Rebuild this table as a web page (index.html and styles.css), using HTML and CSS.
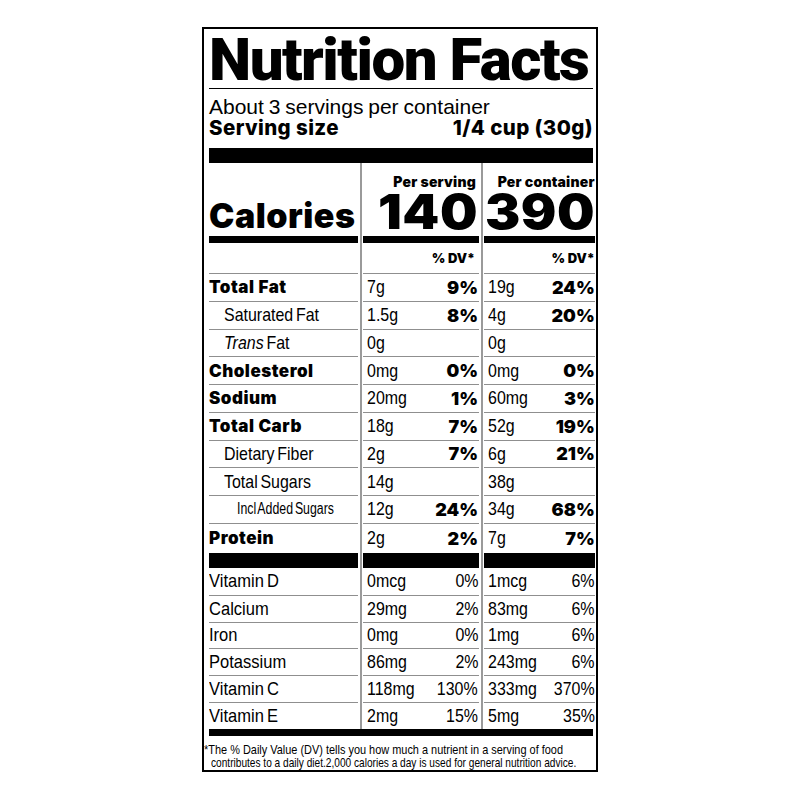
FILE: index.html
```html
<!DOCTYPE html>
<html lang="en">
<head>
<meta charset="utf-8">
<title>Nutrition Facts</title>
<link rel="stylesheet" href="styles.css">
</head>
<body>
<section class="label">
  <h1 class="title">Nutrition Facts</h1>
  <p class="servings">About 3 servings per container</p>
  <p class="serving-size"><span>Serving size</span><span>1/4 cup (30g)</span></p>
  <div class="rule-thick"></div>

  <div class="facts">
    <div class="vline vline-1"></div>
    <div class="vline vline-2"></div>

    <div class="cell c-head c-label"><span class="calories">Calories</span></div>
    <div class="cell c-head c-val"><span class="per">Per serving</span><span class="kcal">140</span></div>
    <div class="cell c-head c-val c-right"><span class="per">Per container</span><span class="kcal">390</span></div>

    <div class="cell c-dv"></div>
    <div class="cell c-dv c-val"><span class="dv">% DV*</span></div>
    <div class="cell c-dv c-val c-right"><span class="dv">% DV*</span></div>

    <div class="cell c-label b">Total Fat</div>
    <div class="cell c-val"><span class="n">7g</span><span class="pct">9%</span></div>
    <div class="cell c-val c-right"><span class="n">19g</span><span class="pct">24%</span></div>

    <div class="cell c-label ind1"><span class="n">Saturated Fat</span></div>
    <div class="cell c-val"><span class="n">1.5g</span><span class="pct">8%</span></div>
    <div class="cell c-val c-right"><span class="n">4g</span><span class="pct">20%</span></div>

    <div class="cell c-label ind1"><span class="n"><i>Trans</i> Fat</span></div>
    <div class="cell c-val"><span class="n">0g</span></div>
    <div class="cell c-val c-right"><span class="n">0g</span></div>

    <div class="cell c-label b">Cholesterol</div>
    <div class="cell c-val"><span class="n">0mg</span><span class="pct">0%</span></div>
    <div class="cell c-val c-right"><span class="n">0mg</span><span class="pct">0%</span></div>

    <div class="cell c-label b">Sodium</div>
    <div class="cell c-val"><span class="n">20mg</span><span class="pct">1%</span></div>
    <div class="cell c-val c-right"><span class="n">60mg</span><span class="pct">3%</span></div>

    <div class="cell c-label b">Total Carb</div>
    <div class="cell c-val"><span class="n">18g</span><span class="pct">7%</span></div>
    <div class="cell c-val c-right"><span class="n">52g</span><span class="pct">19%</span></div>

    <div class="cell c-label ind1"><span class="n">Dietary Fiber</span></div>
    <div class="cell c-val"><span class="n">2g</span><span class="pct">7%</span></div>
    <div class="cell c-val c-right"><span class="n">6g</span><span class="pct">21%</span></div>

    <div class="cell c-label ind1"><span class="n">Total Sugars</span></div>
    <div class="cell c-val"><span class="n">14g</span></div>
    <div class="cell c-val c-right"><span class="n">38g</span></div>

    <div class="cell c-label ind2"><span class="n sm">Incl Added Sugars</span></div>
    <div class="cell c-val"><span class="n">12g</span><span class="pct">24%</span></div>
    <div class="cell c-val c-right"><span class="n">34g</span><span class="pct">68%</span></div>

    <div class="cell c-prot c-label b">Protein</div>
    <div class="cell c-prot c-val"><span class="n">2g</span><span class="pct">2%</span></div>
    <div class="cell c-prot c-val c-right"><span class="n">7g</span><span class="pct">7%</span></div>

    <div class="cell c-label"><span class="n vit">Vitamin D</span></div>
    <div class="cell c-val"><span class="n">0mcg</span><span class="n end">0%</span></div>
    <div class="cell c-val c-right"><span class="n">1mcg</span><span class="n end">6%</span></div>

    <div class="cell c-label"><span class="n vit">Calcium</span></div>
    <div class="cell c-val"><span class="n">29mg</span><span class="n end">2%</span></div>
    <div class="cell c-val c-right"><span class="n">83mg</span><span class="n end">6%</span></div>

    <div class="cell c-label"><span class="n vit">Iron</span></div>
    <div class="cell c-val"><span class="n">0mg</span><span class="n end">0%</span></div>
    <div class="cell c-val c-right"><span class="n">1mg</span><span class="n end">6%</span></div>

    <div class="cell c-label"><span class="n vit">Potassium</span></div>
    <div class="cell c-val"><span class="n">86mg</span><span class="n end">2%</span></div>
    <div class="cell c-val c-right"><span class="n">243mg</span><span class="n end">6%</span></div>

    <div class="cell c-label"><span class="n vit">Vitamin C</span></div>
    <div class="cell c-val"><span class="n">118mg</span><span class="n end">130%</span></div>
    <div class="cell c-val c-right"><span class="n">333mg</span><span class="n end">370%</span></div>

    <div class="cell c-last c-label"><span class="n vit">Vitamin E</span></div>
    <div class="cell c-last c-val"><span class="n">2mg</span><span class="n end">15%</span></div>
    <div class="cell c-last c-val c-right"><span class="n">5mg</span><span class="n end">35%</span></div>
  </div>

  <div class="rule-bottom"></div>
  <p class="footnote"><span class="fn-line fn-1">*The % Daily Value (DV) tells you how much a nutrient in a serving of food</span><span class="fn-line fn-2">contributes to a daily diet.2,000 calories a day is used for general nutrition advice.</span></p>
</section>
</body>
</html>
```

FILE: styles.css
```css
* { box-sizing: border-box; }

body {
  margin: 0;
  background: #fff;
  color: #000;
  font-family: "Liberation Sans", Arial, sans-serif;
}

.label {
  width: 396px;
  margin: 27px auto 0;
  border: 2px solid #000;
  padding: 3px 3px 0 5px;
}

.title {
  margin: 0;
  font-family: Roboto, "Liberation Sans", sans-serif;
  font-weight: 900;
  font-size: 60px;
  line-height: 56px;
  letter-spacing: -1.5px;
  white-space: nowrap;
  border-bottom: 1px solid #000;
}

.servings {
  margin: 7px 0 0;
  font-size: 21px;
  line-height: 21px;
  word-spacing: -1px;
}

.serving-size {
  margin: 0;
  display: flex;
  justify-content: space-between;
  font-family: Inter, "DejaVu Sans", sans-serif;
  font-weight: 800;
  font-size: 20.5px;
  line-height: 21px;
  letter-spacing: 0.4px;
}

.rule-thick {
  height: 15px;
  margin-top: 10px;
  background: #000;
}

.facts {
  display: grid;
  grid-template-columns: 149px 5px 116px 5px 1fr;
  grid-template-rows: 80px 31px repeat(9, 27.75px) 44px 28.25px repeat(4, 26.67px) 26.6px;
}

.vline {
  grid-row: 1 / -1;
  width: 2px;
  margin-left: 2px;
  background: #9a9a9a;
}
.vline-1 { grid-column: 2; }
.vline-2 { grid-column: 4; }

.cell {
  display: flex;
  align-items: center;
  border-bottom: 1px solid #8f8f8f;
  font-size: 19px;
  white-space: nowrap;
}

.c-label { grid-column: 1; }
.c-val { grid-column: 3; justify-content: space-between; padding: 0 1px 0 4px; }
.c-right { grid-column: 5; padding-right: 0; }

/* condensed regular text */
.n {
  display: inline-block;
  transform: scaleX(0.84);
  transform-origin: left center;
  word-spacing: -2px;
}
.n.end { transform-origin: right center; }
.n.vit { transform: scaleX(0.87); word-spacing: -1.5px; }
.n.sm { font-size: 16px; transform: scaleX(0.77); }

.c-head {
  border-bottom: 7px solid #000;
  align-items: flex-end;
}
.c-head.c-val {
  flex-direction: column;
  align-items: flex-end;
  justify-content: flex-end;
}
.c-head.c-label { padding-bottom: 3px; }

.calories,
.per,
.kcal,
.dv,
.b,
.pct {
  font-family: Inter, "DejaVu Sans", sans-serif;
  font-weight: 900;
}

.calories {
  font-size: 34px;
  line-height: 34px;
  letter-spacing: 0.5px;
}

.per {
  font-size: 14px;
  line-height: 12px;
  letter-spacing: 0.2px;
  margin-right: 2px;
}
.c-right .per { margin-right: 0; }

.kcal {
  display: inline-block;
  font-size: 48px;
  line-height: 48px;
  letter-spacing: 0.5px;
  margin-right: -0.5px;
  transform: scaleX(1.1);
  transform-origin: right center;
}

.c-dv.c-val { justify-content: flex-end; padding-right: 4px; }
.c-dv.c-right { padding-right: 0; }
.dv { font-size: 13px; }

.b {
  font-size: 17px;
  letter-spacing: 0.5px;
}

.pct { font-size: 18px; }

.ind1 { padding-left: 15px; }
.ind2 { padding-left: 28px; }

.c-prot { border-bottom: 15px solid #000; }
.c-last { border-bottom: 0; }

.rule-bottom {
  height: 7px;
  background: #000;
}

.footnote {
  margin: 0 0 0 -5px;
  padding: 8px 0 1px;
  font-size: 13.5px;
  line-height: 12.5px;
  white-space: nowrap;
}

.fn-line {
  display: block;
  width: max-content;
  transform-origin: left center;
}
.fn-1 { transform: scaleX(0.81); }
.fn-2 { margin-left: 7px; transform: scaleX(0.75); }
```
